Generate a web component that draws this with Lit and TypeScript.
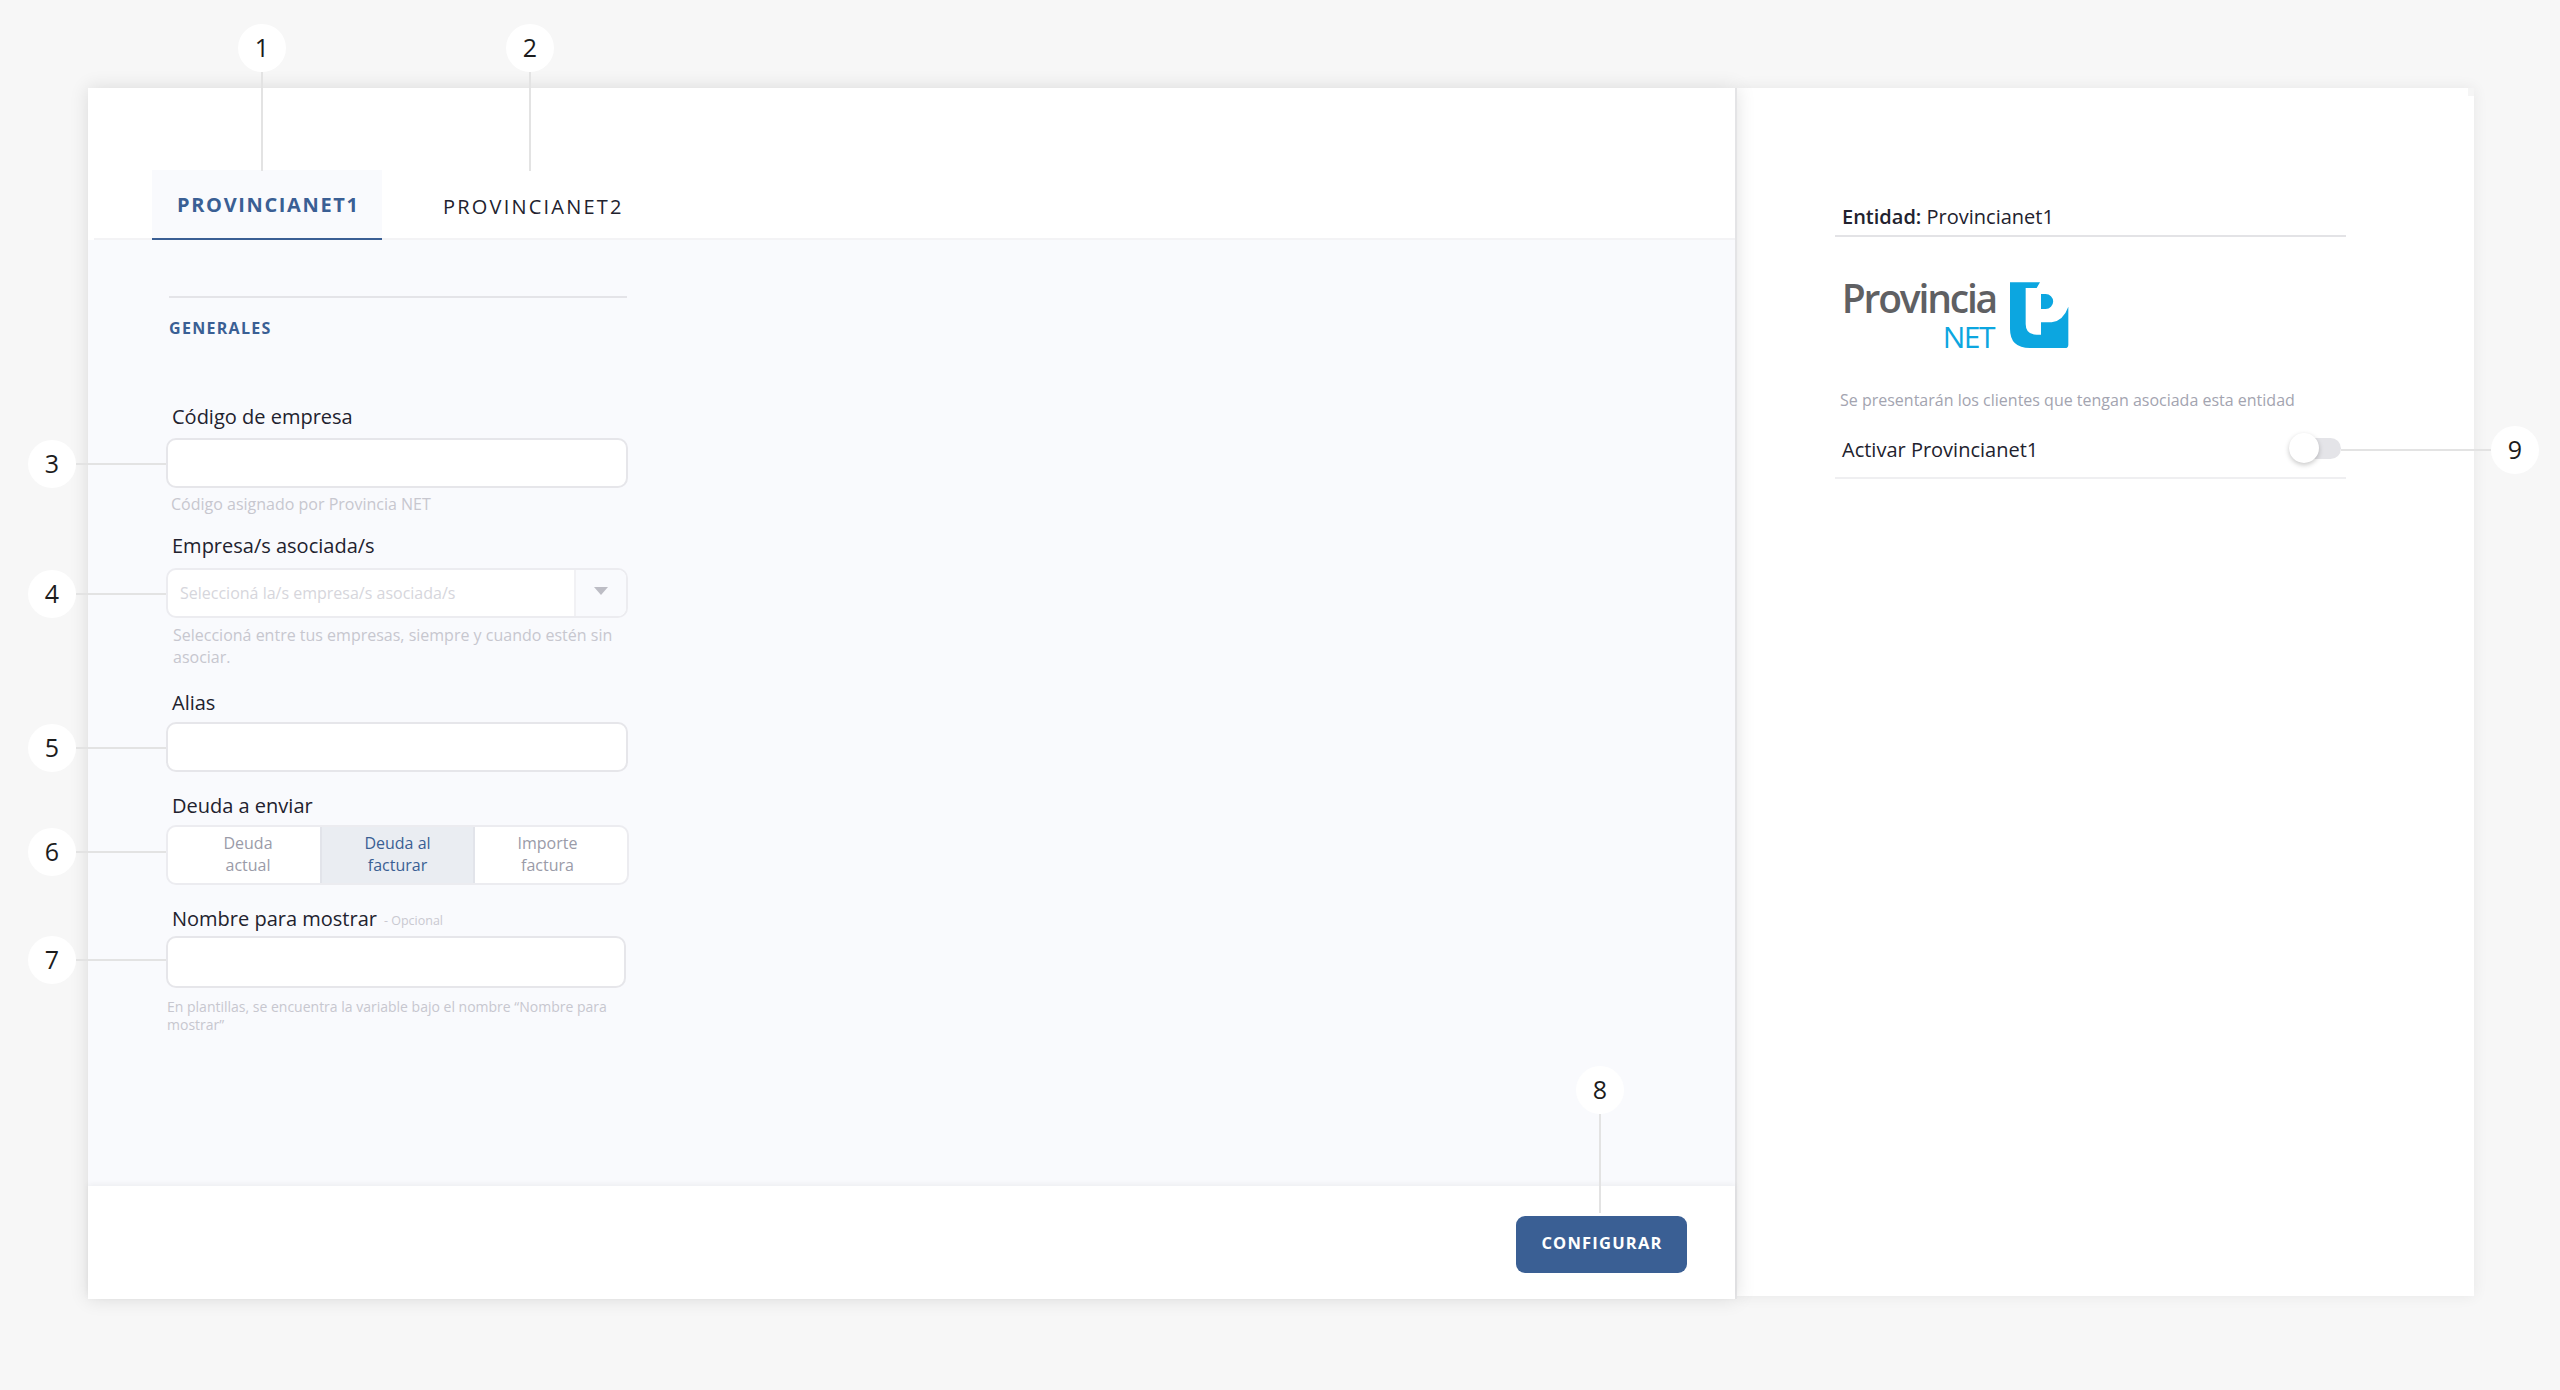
import { LitElement, html, css } from "lit";
import { customElement } from "lit/decorators.js";

type Mark = { n: number; x: number; y: number; lx: number; ly: number; lw: number; lh: number };
const MARKS: Mark[] = [
  { n: 1, x: 238, y: 24, lx: 261, ly: 72, lw: 2, lh: 99 },
  { n: 2, x: 506, y: 24, lx: 529, ly: 72, lw: 2, lh: 99 },
  { n: 3, x: 28, y: 440, lx: 76, ly: 463, lw: 90, lh: 2 },
  { n: 4, x: 28, y: 570, lx: 76, ly: 593, lw: 90, lh: 2 },
  { n: 5, x: 28, y: 724, lx: 76, ly: 747, lw: 90, lh: 2 },
  { n: 6, x: 28, y: 828, lx: 76, ly: 851, lw: 90, lh: 2 },
  { n: 7, x: 28, y: 936, lx: 76, ly: 959, lw: 90, lh: 2 },
  { n: 8, x: 1576, y: 1066, lx: 1599, ly: 1114, lw: 2, lh: 99 },
  { n: 9, x: 2491, y: 426, lx: 2341, ly: 449, lw: 150, lh: 2 },
];

@customElement("app-root")
export class AppRoot extends LitElement {
  static styles = css`
    :host {
      display: block;
      position: relative;
      width: 2560px;
      height: 1390px;
      overflow: hidden;
      background: #f7f7f7;
      font-family: "Open Sans", "Liberation Sans", sans-serif;
      color: #22222e;
    }
    * { box-sizing: border-box; }
    .page { display: flex; align-items: flex-start; padding: 88px 0 0 88px; }
    .main {
      width: 1649px;
      height: 1211px;
      display: flex;
      flex-direction: column;
      border-right: 2px solid #e4e4e6;
      box-shadow: 0 0 18px rgba(0, 0, 0, 0.12);
      position: relative;
      z-index: 1;
    }
    .tabs {
      height: 152px;
      background: #fff;
      display: flex;
      align-items: flex-end;
      padding-left: 64px;
      flex: none;
      position: relative;
    }
    .tabs::after {
      content: "";
      position: absolute;
      left: 6px;
      right: 0;
      bottom: 0;
      height: 2px;
      background: #f3f3f5;
    }
    .tab {
      height: 70px;
      font-size: 20px;
      white-space: nowrap;
      display: flex;
      align-items: center;
      position: relative;
      z-index: 1;
    }
    .tab.on {
      width: 230px;
      padding: 1px 0 0 25px;
      font-weight: 700;
      letter-spacing: 1.65px;
      color: #3a5f94;
      background: #f9fafd;
      border-bottom: 2px solid #3a5f94;
    }
    .tab.off { margin-left: 61px; padding-top: 3px; font-weight: 500; color: #22222e; letter-spacing: 2.2px; }
    .body { flex: 1; background: #f9fafd; padding: 56px 0 0 78px; }
    .form { width: 462px; display: flex; flex-direction: column; align-items: flex-start; }
    .rule { height: 2px; width: 458px; margin-left: 3px; background: #e4e4e8; }
    .section {
      margin: 20px 0 0 3px;
      font-size: 16px;
      line-height: 20px;
      font-weight: 700;
      letter-spacing: 1.3px;
      color: #3a5f94;
    }
    .label { font-size: 20px; line-height: 24px; margin-left: 6px; color: #22222e; white-space: nowrap; }
    .opt { font-size: 12.5px; line-height: 1; color: #c9c9d1; margin-left: 7px; vertical-align: 1px; }
    .field {
      width: 462px;
      height: 50px;
      background: #fff;
      border: 2px solid #e6e6ea;
      border-radius: 10px;
    }
    .help { font-size: 16px; line-height: 18px; color: #c7c7cf; margin: 7px 0 0 5px; }
    .select {
      display: flex;
      align-items: stretch;
      overflow: hidden;
      border-color: #ececf0;
    }
    .ph { flex: 1; padding-left: 12px; font-size: 16px; line-height: 46px; color: #d6d6dc; }
    .caret {
      width: 52px;
      background: #f9fafd;
      border-left: 2px solid #f1f1f4;
      display: flex;
      align-items: center;
      justify-content: center;
      padding-bottom: 4px;
    }
    .caret i {
      width: 0;
      height: 0;
      border-left: 7px solid transparent;
      border-right: 7px solid transparent;
      border-top: 8px solid #bdbdc5;
    }
    .seg {
      width: 463px;
      height: 60px;
      display: grid;
      grid-template-columns: 152px 155px 1fr;
      background: #fff;
      border: 2px solid #ececf0;
      border-radius: 10px;
      overflow: hidden;
    }
    .seg div {
      text-align: center;
      font-size: 16px;
      line-height: 22px;
      padding-top: 5px;
      color: #9a9ba8;
    }
    .seg .first { padding-left: 8px; }
    .seg .last { padding-right: 7px; }
    .seg .sel { background: #eaedf2; color: #3a5f94; border-left: 2px solid #e2e4ea; border-right: 2px solid #e2e4ea; }
    .foot {
      flex: none;
      height: 113px;
      background: #fff;
      box-shadow: 0 -2px 6px rgba(0, 0, 0, 0.05);
      display: flex;
      justify-content: flex-end;
      align-items: flex-start;
      padding: 30px 48px 0 0;
      position: relative;
    }
    .btn {
      width: 171px;
      height: 57px;
      border: 0;
      border-radius: 9px;
      background: #3a5f94;
      color: #fff;
      font: 700 16.5px/54px "Open Sans", sans-serif;
      letter-spacing: 1.2px;
      text-align: center;
      padding: 0 0 3px 1px;
    }
    .side {
      width: 737px;
      height: 1208px;
      background: #fff;
      padding: 112px 0 0 98px;
      position: relative;
      box-shadow: 0 0 14px rgba(0, 0, 0, 0.07);
    }
    .side::after {
      content: "";
      position: absolute;
      right: 0;
      top: 0;
      width: 6px;
      height: 8px;
      background: #f5f5f5;
    }
    .ent { font-size: 20px; line-height: 34px; padding-left: 7px; width: 511px; border-bottom: 2px solid #e3e3e6; height: 37px; }
    .ent b { font-weight: 600; }
    .logo { display: flex; margin: 37px 0 0 9px; height: 80px; align-items: flex-start; }
    .wm { width: 152px; display: flex; flex-direction: column; align-items: flex-end; color: #5f6063; }
    .wm .a { font-size: 39px; line-height: 40px; font-weight: 600; letter-spacing: -2.2px; margin-top: 4px; white-space: nowrap; }
    .wm .b { font-size: 30px; line-height: 34px; color: #0ca6e0; letter-spacing: -1.5px; margin: 2px 2px 0 0; }
    .logo svg { width: 75px; height: 80px; margin-left: 9px; display: block; flex: none; }
    .note { font-size: 16px; line-height: 20px; color: #a3a4b0; margin: 36px 0 0 5px; white-space: nowrap; }
    .row {
      width: 511px;
      height: 56px;
      margin-top: 13px;
      padding: 0 5px 0 7px;
      display: flex;
      align-items: center;
      justify-content: space-between;
      border-bottom: 2px solid #efeff1;
      font-size: 20px;
    }
    .row span { margin-top: -1px; }
    .toggle { width: 52px; height: 21px; background: #e4e4e8; border-radius: 11px; position: relative; margin-top: -4px; }
    .toggle i {
      position: absolute;
      left: 0;
      top: -5px;
      width: 30px;
      height: 30px;
      border-radius: 50%;
      background: #fff;
      box-shadow: 0 2px 5px rgba(0, 0, 0, 0.22);
    }
    .mark {
      position: absolute;
      width: 48px;
      height: 48px;
      padding-bottom: 2px;
      border-radius: 50%;
      background: #fff;
      display: flex;
      align-items: center;
      justify-content: center;
      font-size: 25px;
      color: #1c1c1c;
      z-index: 3;
    }
    .line { position: absolute; background: #e3e3e3; z-index: 2; }
  `;

  render() {
    return html`
      <div class="page">
        <div class="main">
          <div class="tabs">
            <div class="tab on">PROVINCIANET1</div>
            <div class="tab off">PROVINCIANET2</div>
          </div>
          <div class="body">
            <div class="form">
              <div class="rule"></div>
              <div class="section">GENERALES</div>
              <div class="label" style="margin-top:67px">Código de empresa</div>
              <div class="field" style="margin-top:9px"></div>
              <div class="help">Código asignado por Provincia NET</div>
              <div class="label" style="margin-top:21px">Empresa/s asociada/s</div>
              <div class="field select" style="margin-top:10px">
                <div class="ph">Seleccioná la/s empresa/s asociada/s</div>
                <div class="caret"><i></i></div>
              </div>
              <div class="help" style="line-height:22px;margin:6px 0 0 7px">
                Seleccioná entre tus empresas, siempre y cuando estén sin asociar.
              </div>
              <div class="label" style="margin-top:23px">Alias</div>
              <div class="field" style="margin-top:7px"></div>
              <div class="label" style="margin-top:22px">Deuda a enviar</div>
              <div class="seg" style="margin-top:7px">
                <div class="first">Deuda<br />actual</div>
                <div class="sel">Deuda al<br />facturar</div>
                <div class="last">Importe<br />factura</div>
              </div>
              <div class="label" style="margin-top:22px">
                Nombre para mostrar<span class="opt">- Opcional</span>
              </div>
              <div class="field" style="margin-top:5px;height:52px;width:460px"></div>
              <div class="help" style="margin:10px 0 0 1px;font-size:14px">
                En plantillas, se encuentra la variable bajo el nombre “Nombre para mostrar”
              </div>
            </div>
          </div>
          <div class="foot"><button class="btn">CONFIGURAR</button></div>
        </div>
        <div class="side">
          <div class="ent"><b>Entidad:</b> Provincianet1</div>
          <div class="logo">
            <div class="wm">
              <div class="a">Provincia</div>
              <div class="b">NET</div>
            </div>
            <svg viewBox="0 0 225 240">
              <path
                fill="#0ca6e0"
                d="M15 25H105L95 42H62V150Q62 182 95 182H108V145H140Q175 140 190 98V212Q190 222 180 222H75Q15 222 15 165Z"
              />
              <path fill="#0ca6e0" d="M108 60H122A22.5 22.5 0 0 1 122 105H108Z" />
            </svg>
          </div>
          <div class="note">Se presentarán los clientes que tengan asociada esta entidad</div>
          <div class="row">
            <span>Activar Provincianet1</span>
            <div class="toggle"><i></i></div>
          </div>
        </div>
      </div>
      ${MARKS.map(
        (m) => html`
          <div class="line" style="left:${m.lx}px;top:${m.ly}px;width:${m.lw}px;height:${m.lh}px"></div>
          <div class="mark" style="left:${m.x}px;top:${m.y}px">${m.n}</div>
        `
      )}
    `;
  }
}
